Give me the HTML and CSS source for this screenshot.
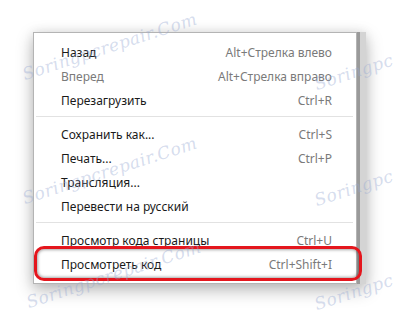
FILE: index.html
```html
<!DOCTYPE html>
<html lang="ru">
<head>
    <meta charset="UTF-8">
    <meta name="viewport" content="width=device-width, initial-scale=1.0">
    <title>Контекстное меню</title>
    <link rel="stylesheet" href="styles.css">
</head>
<body>
    <div class="stage">
        <div class="frame">
            <!-- Context menu -->
            <ul class="menu">
                <li class="item"><span>Назад</span><span class="key">Alt+Стрелка влево</span></li>
                <li class="item disabled"><span>Вперед</span><span class="key">Alt+Стрелка вправо</span></li>
                <li class="item"><span>Перезагрузить</span><span class="key">Ctrl+R</span></li>
                <li class="sep"></li>
                <li class="item"><span>Сохранить как...</span><span class="key">Ctrl+S</span></li>
                <li class="item"><span>Печать...</span><span class="key">Ctrl+P</span></li>
                <li class="item"><span>Трансляция...</span></li>
                <li class="item"><span>Перевести на русский</span></li>
                <li class="sep"></li>
                <li class="item"><span>Просмотр кода страницы</span><span class="key">Ctrl+U</span></li>
                <li class="item marked"><span>Просмотреть код</span><span class="key">Ctrl+Shift+I</span></li>
            </ul>
            <div class="scrollbar"></div>
        </div>

        <!-- Watermarks -->
        <span class="mark m1">Soringpcrepair.Com</span>
        <span class="mark m2">Soringpcrepair.Com</span>
        <span class="mark m3">Soringpcrepair.Com</span>
        <span class="mark m4">Soringpc</span>
        <span class="mark m5">Soringpc</span>
        <span class="mark m6">Soringpc</span>
    </div>
</body>
</html>
```
FILE: styles.css
```css
* {
    margin: 0;
    padding: 0;
    box-sizing: border-box;
}

body {
    font-family: "Noto Sans", "Segoe UI", sans-serif;
    background-color: #fff;
    width: 397px;
    height: 320px;
    overflow: hidden;
}

.stage {
    position: relative;
    width: 397px;
    height: 320px;
    padding: 32px 0 0 33px;
}

.frame {
    display: flex;
    width: 333px;
    box-shadow: 0 6px 16px rgba(0, 0, 0, 0.28), 0 0 10px rgba(0, 0, 0, 0.08);
}

.menu {
    list-style: none;
    width: 324px;
    background-color: #fff;
    border: 1px solid #b4b4b4;
    padding: 7px 24px 7px 27px;
}

.scrollbar {
    width: 9px;
    background: linear-gradient(to right, #9a9a9a 0 3px, #d4d4d4 3px 100%);
}

.item {
    position: relative;
    display: flex;
    justify-content: space-between;
    align-items: center;
    height: 24px;
    font-size: 12px;
    color: #1a1a1a;
}

.item .key {
    color: #7a7a7a;
}

.item.disabled {
    color: #7a7a7a;
}

.sep {
    height: 1px;
    background-color: #e2e2e2;
    margin: 4px -21px 5px -25px;
}

/* red frame round the last item */
.item.marked::after {
    content: "";
    position: absolute;
    left: -27px;
    right: -30px;
    top: -6px;
    bottom: -5px;
    border: 3px solid #e4161d;
    border-radius: 10px;
    box-shadow: inset 0 0 3px 1px rgba(0, 0, 0, 0.35);
}

.mark {
    position: absolute;
    font-family: "DejaVu Serif", serif;
    font-style: italic;
    font-size: 17px;
    letter-spacing: 0.5px;
    color: rgba(150, 168, 210, 0.4);
    transform: rotate(-18deg);
    transform-origin: left bottom;
    white-space: nowrap;
    pointer-events: none;
}

.m1 { left: 26px; top: 64px; }
.m2 { left: 26px; top: 188px; }
.m3 { left: 30px; top: 292px; }
.m4 { left: 318px; top: 74px; }
.m5 { left: 318px; top: 190px; }
.m6 { left: 318px; top: 294px; }
```
